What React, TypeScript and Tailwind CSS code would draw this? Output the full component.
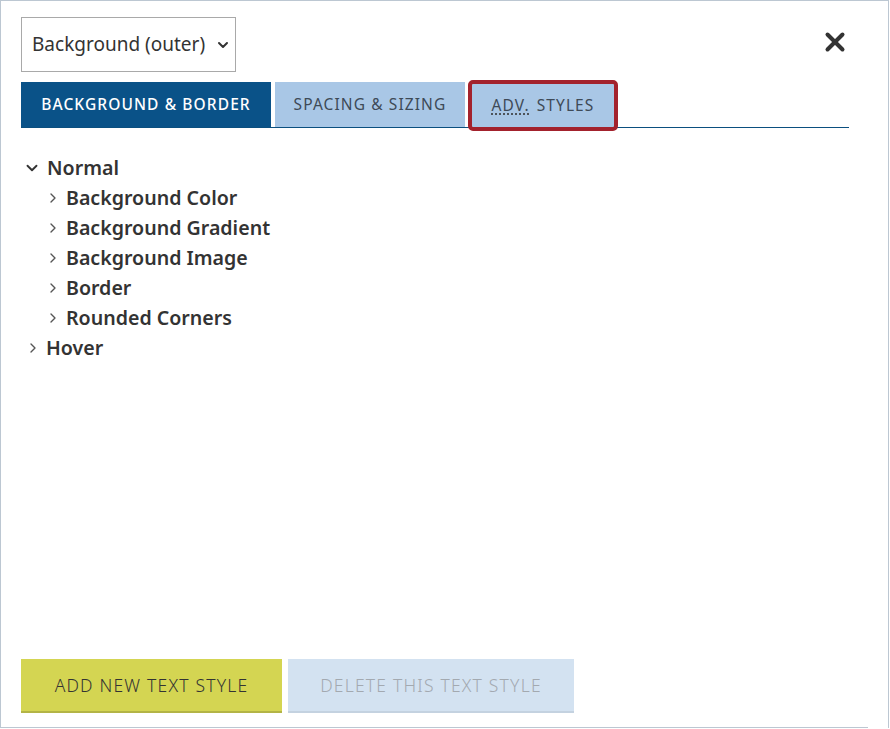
import { ChevronDown, ChevronRight, X } from "lucide-react"

const children = ["Background Color", "Background Gradient", "Background Image", "Border", "Rounded Corners"]

export default function App() {
  return (
    <div
      className="relative w-[889px] h-[728px] border-t border-l border-r border-[#bcc7d2] bg-white text-[#333]"
      style={{ fontFamily: '"Noto Sans", "Open Sans", sans-serif' }}
    >
      <div className="flex flex-col h-full pl-5 pr-10">
        <div className="flex items-start justify-between pt-4">
          <div className="flex items-center h-[55px] w-[215px] border border-[#a9a9a9] pl-[10px] pr-[4px]">
            <span className="text-[19px] text-[#333] whitespace-nowrap">Background (outer)</span>
            <ChevronDown className="w-[16px] h-[16px] ml-auto shrink-0 text-[#333]" strokeWidth={3} />
          </div>
          <button className="mt-[10px] mr-[-2px] text-[#333]">
            <X className="w-[30px] h-[30px]" strokeWidth={3.2} />
          </button>
        </div>

        <div className="mt-[10px] flex items-end border-b border-[#0b4f7f] w-[828px] h-[46px]">
          <div className="h-[45px] w-[250px] bg-[#0a5288] flex items-center justify-center text-white text-[15.5px] font-medium tracking-[1.1px]">
            BACKGROUND &amp; BORDER
          </div>
          <div className="ml-[4px] h-[45px] w-[190px] bg-[#a9c7e6] flex items-center justify-center text-[#3e4a57] text-[15.5px] tracking-[1.1px]">
            SPACING &amp; SIZING
          </div>
          <div className="ml-[3px] h-[51px] w-[150px] -mb-[4px] rounded-[5px] border-[4px] border-[#a3222d] bg-[#a9c7e6] flex items-center justify-center text-[#3e4a57] text-[15.5px] tracking-[1.1px]">
            <span className="underline decoration-dotted decoration-[#333] underline-offset-[3px]">ADV.</span>
            <span className="ml-[7px]">STYLES</span>
          </div>
        </div>

        <div className="mt-[25px] flex flex-col text-[19.6px] font-semibold text-[#333]">
          <div className="flex items-center h-[30px]">
            <ChevronDown className="w-[18px] h-[18px] ml-[2px] mr-[6px] text-[#333]" strokeWidth={2.5} />
            <span>Normal</span>
          </div>
          {children.map((c) => (
            <div key={c} className="flex items-center h-[30px] pl-[24px]">
              <ChevronRight className="w-[16px] h-[16px] mr-[5px] text-[#555]" strokeWidth={2} />
              <span>{c}</span>
            </div>
          ))}
          <div className="flex items-center h-[30px]">
            <ChevronRight className="w-[16px] h-[16px] ml-[4px] mr-[5px] text-[#555]" strokeWidth={2} />
            <span>Hover</span>
          </div>
        </div>

        <div className="mt-auto mb-[15px] flex gap-[6px]">
          <button className="h-[54px] w-[261px] bg-[#d4d552] border-b-2 border-[#b3b446] text-[17.5px] font-light tracking-[1.2px] text-[#333]">
            ADD NEW TEXT STYLE
          </button>
          <button className="h-[54px] w-[286px] bg-[#d3e2f1] border-b-2 border-[#c4d2e0] text-[17.5px] font-light tracking-[1.2px] text-[#a3a9b0]">
            DELETE THIS TEXT STYLE
          </button>
        </div>
      </div>
      <div className="absolute left-0 bottom-0 w-[867px] h-px bg-[#bcc7d2]" />
    </div>
  )
}
